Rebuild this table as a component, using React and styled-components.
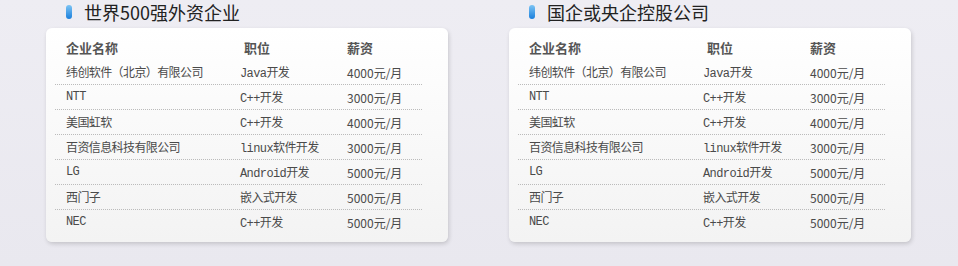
import React from 'react';
import styled, { createGlobalStyle } from 'styled-components';

const panels = [
  {
    title: '世界500强外资企业',
    rows: [
      ['纬创软件（北京）有限公司', 'Java开发', '4000元/月'],
      ['NTT', 'C++开发', '3000元/月'],
      ['美国虹软', 'C++开发', '4000元/月'],
      ['百资信息科技有限公司', 'linux软件开发', '3000元/月'],
      ['LG', 'Android开发', '5000元/月'],
      ['西门子', '嵌入式开发', '5000元/月'],
      ['NEC', 'C++开发', '5000元/月'],
    ],
  },
  {
    title: '国企或央企控股公司',
    rows: [
      ['纬创软件（北京）有限公司', 'Java开发', '4000元/月'],
      ['NTT', 'C++开发', '3000元/月'],
      ['美国虹软', 'C++开发', '4000元/月'],
      ['百资信息科技有限公司', 'linux软件开发', '3000元/月'],
      ['LG', 'Android开发', '5000元/月'],
      ['西门子', '嵌入式开发', '5000元/月'],
      ['NEC', 'C++开发', '5000元/月'],
    ],
  },
];

function App() {
  return (
    <>
      <GlobalStyle />
      <Page>
        {panels.map((panel) => (
          <Section key={panel.title}>
            <Title>
              <Pill />
              {panel.title}
            </Title>
            <Card>
              <Row className='header'>
                <Cell>企业名称</Cell>
                <Cell $shift>职位</Cell>
                <Cell>薪资</Cell>
              </Row>
              {panel.rows.map((row, i) => (
                <Row key={i}>
                  <Cell $mono>{row[0]}</Cell>
                  <Cell $mono>{row[1]}</Cell>
                  <Cell>{row[2]}</Cell>
                </Row>
              ))}
            </Card>
          </Section>
        ))}
      </Page>
    </>
  );
}

const GlobalStyle = createGlobalStyle`
  body {
    margin: 0;
    background: #ebeaf0;
    font-family: 'Noto Sans CJK SC', sans-serif;
  }
`;

const Page = styled.div`
  display: flex;
  gap: 61px;
  padding-left: 46px;
  height: 266px;
  background: linear-gradient(#eeedf3, #e9e8ef);
`;

const Section = styled.section`
  width: 402px;
`;

const Title = styled.h2`
  display: flex;
  align-items: center;
  gap: 12px;
  height: 24px;
  margin: 0 0 4px;
  padding-left: 20px;

  font-size: 18px;
  font-weight: 400;
  color: #222;
`;

const Pill = styled.span`
  width: 6px;
  height: 14px;
  border-radius: 3px;
  background: linear-gradient(#7cc4f4, #1b7fdc);
`;

const Card = styled.div`
  padding: 7px 26px 8px 9px;
  border-radius: 6px;
  background: linear-gradient(#ffffff, #f3f3f3);
  box-shadow: 1px 2px 4px rgba(0, 0, 0, 0.16);
`;

const Row = styled.div`
  display: grid;
  grid-template-columns: 174px 107px 1fr;
  align-items: center;
  height: 24px;
  padding-left: 11px;

  font-size: 12px;
  color: #4a4a4a;
  border-bottom: 1px dotted #bbb;

  &:last-child {
    border-bottom: none;
  }

  &.header {
    height: 25px;
    border-bottom: none;
    font-size: 13px;
    font-weight: 700;
    color: #555;
  }
`;

const Cell = styled.span`
  white-space: nowrap;
  padding-left: ${(p) => (p.$shift ? '4px' : '0')};
  letter-spacing: ${(p) => (p.$mono ? '-0.6px' : '0')};
  font-family: ${(p) =>
    p.$mono
      ? "'Liberation Mono', 'Noto Sans CJK SC', monospace"
      : "'Noto Sans CJK SC', sans-serif"};
`;

export default App;
